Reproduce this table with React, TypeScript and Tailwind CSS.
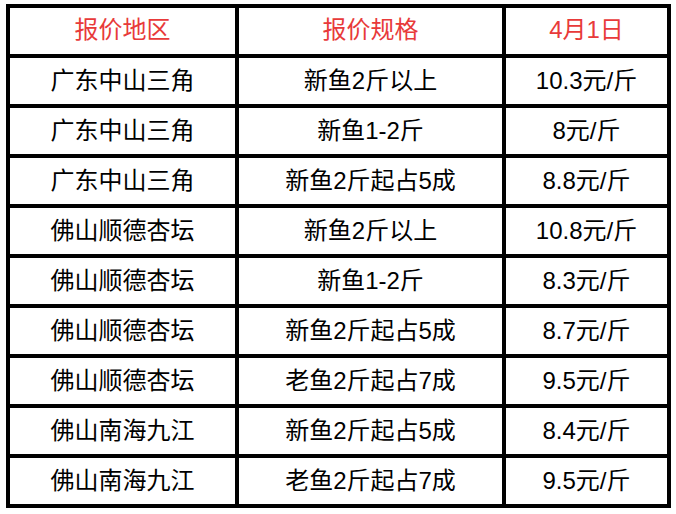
const HEAD = ["报价地区", "报价规格", "4月1日"];

const ROWS: [string, string, string][] = [
  ["广东中山三角", "新鱼2斤以上", "10.3元/斤"],
  ["广东中山三角", "新鱼1-2斤", "8元/斤"],
  ["广东中山三角", "新鱼2斤起占5成", "8.8元/斤"],
  ["佛山顺德杏坛", "新鱼2斤以上", "10.8元/斤"],
  ["佛山顺德杏坛", "新鱼1-2斤", "8.3元/斤"],
  ["佛山顺德杏坛", "新鱼2斤起占5成", "8.7元/斤"],
  ["佛山顺德杏坛", "老鱼2斤起占7成", "9.5元/斤"],
  ["佛山南海九江", "新鱼2斤起占5成", "8.4元/斤"],
  ["佛山南海九江", "老鱼2斤起占7成", "9.5元/斤"],
];

export default function App() {
  return (
    <div className="w-[676px] h-[514px] bg-white pt-[4px] pl-[6px] font-['Liberation_Sans','Noto_Sans_CJK_SC',sans-serif]">
      <div className="grid w-fit grid-cols-[225px_263px_161px] auto-rows-[46px] gap-[4px] bg-black p-[4px] text-[24px] leading-none">
        {HEAD.map((h) => (
          <div
            key={h}
            className="flex items-center justify-center bg-white pb-[2px] text-[#e83a3a]"
          >
            {h}
          </div>
        ))}
        {ROWS.map((r, i) =>
          r.map((c, j) => (
            <div
              key={`${i}-${j}`}
              className="flex items-center justify-center bg-white pb-[1px] text-black"
            >
              {c}
            </div>
          ))
        )}
      </div>
    </div>
  );
}
